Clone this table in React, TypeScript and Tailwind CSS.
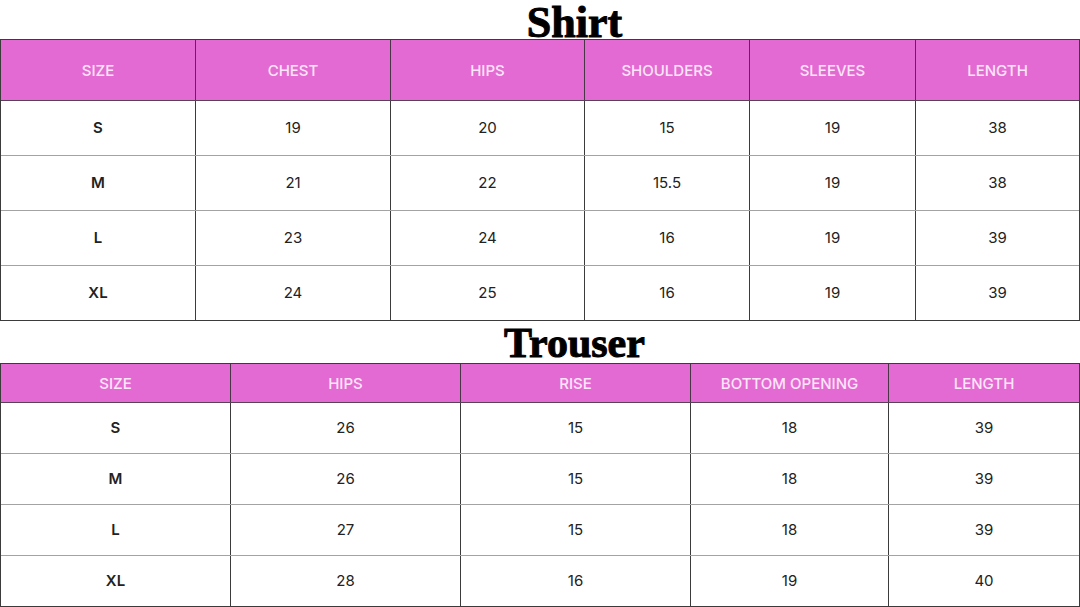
import React from 'react';

type Table = {
  cols: string;
  headerH: string;
  rowH: string;
  headers: string[];
  rows: string[][];
};

const shirt: Table = {
  cols: 'grid-cols-[194px_195px_194px_165px_166px_1fr]',
  headerH: 'h-[60px]',
  rowH: 'h-[54px]',
  headers: ['SIZE', 'CHEST', 'HIPS', 'SHOULDERS', 'SLEEVES', 'LENGTH'],
  rows: [
    ['S', '19', '20', '15', '19', '38'],
    ['M', '21', '22', '15.5', '19', '38'],
    ['L', '23', '24', '16', '19', '39'],
    ['XL', '24', '25', '16', '19', '39'],
  ],
};

const trouser: Table = {
  cols: 'grid-cols-[229px_230px_230px_198px_1fr]',
  headerH: 'h-[38px]',
  rowH: 'h-[50px]',
  headers: ['SIZE', 'HIPS', 'RISE', 'BOTTOM OPENING', 'LENGTH'],
  rows: [
    ['S', '26', '15', '18', '39'],
    ['M', '26', '15', '18', '39'],
    ['L', '27', '15', '18', '39'],
    ['XL', '28', '16', '19', '40'],
  ],
};

const SizeTable: React.FC<{ t: Table }> = ({ t }) => (
  <div className="border border-[#3b3b3b] font-['Inter',sans-serif]">
    <div className={`grid ${t.cols} bg-[#e46ad3] border-b border-[#5a4058]`}>
      {t.headers.map((h, i) => (
        <div
          key={h}
          className={`${t.headerH} flex items-center justify-center pt-[2px] text-[15px] font-medium text-[#fce6f8] ${i > 0 ? 'border-l border-[#4a3448]' : ''}`}
        >
          {h}
        </div>
      ))}
    </div>
    {t.rows.map((row, r) => (
      <div key={r} className={`grid ${t.cols} ${r > 0 ? 'border-t border-[#a3a3a3]' : ''}`}>
        {row.map((v, i) => (
          <div
            key={i}
            className={`${t.rowH} flex items-center justify-center text-[15px] text-[#222] ${i === 0 ? 'font-semibold text-[#111]' : 'border-l border-[#3b3b3b]'}`}
          >
            {v}
          </div>
        ))}
      </div>
    ))}
  </div>
);

export default function App() {
  return (
    <div className="w-[1080px] h-[607px] bg-white overflow-hidden">
      <div className="h-[39px] pl-[69px] text-center">
        <div className="font-['Liberation_Serif',serif] font-bold text-[44px] leading-[46px] text-black [-webkit-text-stroke:1px_black]">
          Shirt
        </div>
      </div>
      <SizeTable t={shirt} />
      <div className="h-[42px] pl-[69px] text-center">
        <div className="font-['Liberation_Serif',serif] font-bold text-[42px] leading-[44px] text-black [-webkit-text-stroke:1px_black]">
          Trouser
        </div>
      </div>
      <SizeTable t={trouser} />
    </div>
  );
}
